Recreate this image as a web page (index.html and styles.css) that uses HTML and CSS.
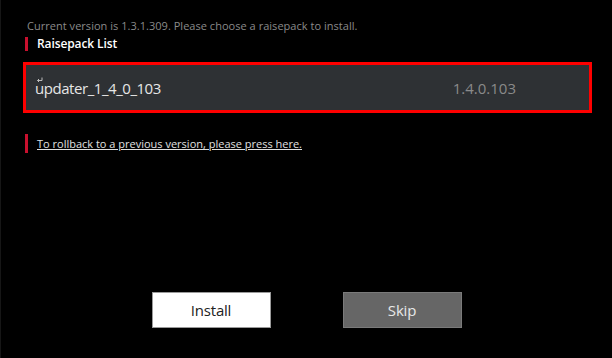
FILE: index.html
```html
<!DOCTYPE html>
<html>
<head>
<meta name="viewport" content="width=device-width, initial-scale=1">
<link rel="stylesheet" href="styles.css">
</head>
<body>
  <div class="updater">
    <p class="intro">Current version is 1.3.1.309. Please choose a raisepack to install.</p>

    <h2 class="section-title">Raisepack List</h2>

    <ul class="pack-list">
      <li class="pack selected">
        <span class="pack-name">
          <svg class="caret" width="7" height="6" viewBox="0 0 7 6">
            <path d="M6 0.5V3.5H1.5M3 2L1.5 3.5L3 5" fill="none" stroke="#bdbdbd" stroke-width="1"/>
          </svg>updater_1_4_0_103</span>
        <span class="pack-version">1.4.0.103</span>
      </li>
    </ul>

    <div class="rollback">
      <a href="#">To rollback to a previous version, please press here.</a>
    </div>

    <div class="actions">
      <span class="btn btn-install">Install</span>
      <span class="btn btn-skip">Skip</span>
    </div>
  </div>
</body>
</html>
```

FILE: styles.css
```css
* {
  box-sizing: border-box;
}

body {
  margin: 0;
  background: #000;
  font-family: "Open Sans", "Noto Sans", sans-serif;
}

/* Whole dialog area */
.updater {
  height: 358px;
  border-left: 1px solid #161616;
  padding-top: 18px;
}

.intro {
  margin: 0 0 0 26px;
  font-size: 11px;
  line-height: 16px;
  color: #8a8a8a;
  letter-spacing: 0.03px;
}

/* Red marker before the headings */
.section-title {
  margin: 3px 0 0 24px;
  padding-left: 9px;
  border-left: 3px solid #c8102e;
  height: 14px;
  font-size: 12px;
  line-height: 14px;
  font-weight: 600;
  letter-spacing: -0.1px;
  color: #fff;
}

.pack-list {
  margin: 11px 20px 0 22px;
  padding: 0;
  list-style: none;
}

.pack {
  display: flex;
  justify-content: space-between;
  align-items: center;
  height: 51px;
  padding: 0 73px 0 9px;
  background: #2e3134;
  font-size: 15px;
}

.pack.selected {
  border: 3px solid #ff0000;
}

.pack-name {
  position: relative;
  color: #e6e6e6;
  letter-spacing: -0.45px;
}

/* little return mark over the first letter */
.caret {
  position: absolute;
  left: 1px;
  top: -1px;
}

.pack-version {
  color: #8a8a8a;
}

.rollback {
  margin: 21px 0 0 24px;
  padding-left: 9px;
  border-left: 3px solid #c8102e;
  height: 19px;
  line-height: 19px;
  font-size: 11px;
}

.rollback a {
  color: #e0e0e0;
}

.actions {
  display: flex;
  justify-content: center;
  gap: 72px;
  margin-top: 139px;
}

.btn {
  width: 119px;
  height: 36px;
  line-height: 34px;
  text-align: center;
  font-size: 15px;
  letter-spacing: -0.2px;
  border: 1px solid #9a9a9a;
}

.btn-install {
  background: #fff;
  color: #222;
}

.btn-skip {
  background: #666;
  border-color: #7a7a7a;
  color: #e8e8e8;
}
```
